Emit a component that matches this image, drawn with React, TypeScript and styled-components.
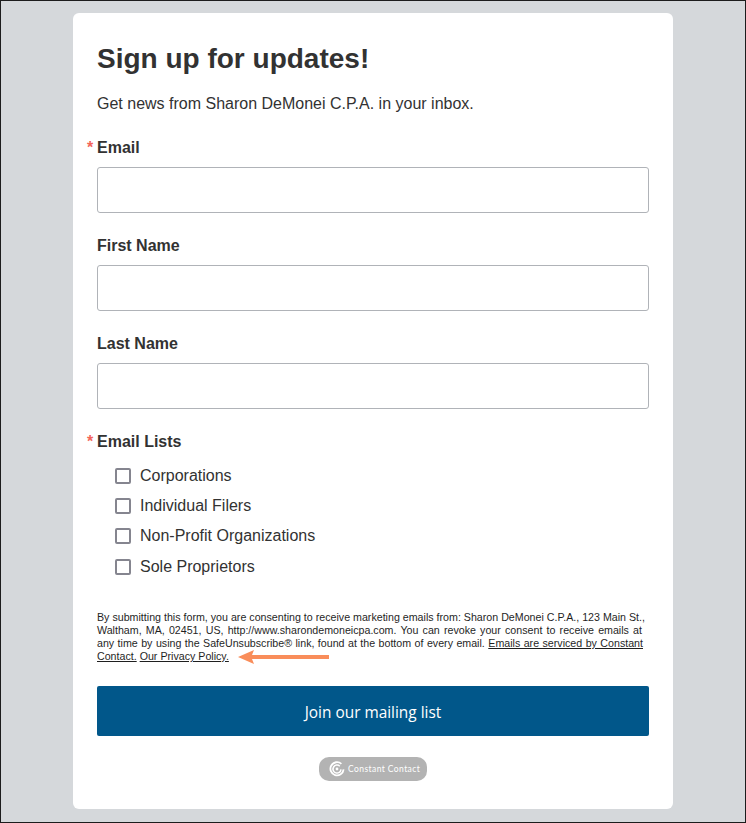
import styled, { createGlobalStyle } from 'styled-components';

const GlobalStyle = createGlobalStyle`
  * { box-sizing: border-box; }
  html, body { margin: 0; padding: 0; }
  body { font-family: "Liberation Sans", Arial, sans-serif; color: #323232; }
`;

const Page = styled.div`
  width: 746px;
  height: 823px;
  padding: 12px 72px 0;
  background-color: #d5d8db;
  border: 1px solid #1c1c1c;
  overflow: hidden;
`;
const Card = styled.form`
  width: 600px;
  height: 796px;
  padding: 30px 24px 0;
  background-color: #fff;
  border-radius: 6px;
`;
const Title = styled.h1`
  margin: 0;
  font-size: 28px;
  line-height: 32px;
  font-weight: 700;
`;
const Intro = styled.p`
  margin: 19px 0 0;
  font-size: 16px;
  line-height: 20px;
`;
const Field = styled.div`
  margin-top: 23px;
  &:first-of-type { margin-top: 24px; }
`;
const Label = styled.label<{ $required?: boolean }>`
  display: block;
  position: relative;
  font-size: 16px;
  line-height: 20px;
  font-weight: 700;
  &::before {
    content: ${(p) => (p.$required ? '"*"' : 'none')};
    position: absolute;
    left: -10px;
    top: 0;
    color: #f4655a;
    font-weight: 700;
    font-size: 16px;
  }
`;
const Input = styled.input`
  display: block;
  width: 552px;
  height: 46px;
  margin-top: 9px;
  background: #fff;
  border: 1px solid #b0b3b8;
  border-radius: 3px;
`;
const Lists = styled.div`
  margin-top: 23px;
`;
const Options = styled.div`
  display: flex;
  flex-direction: column;
  gap: 10.2px;
  margin: 14px 0 0 18px;
`;
const Option = styled.label`
  display: flex;
  align-items: center;
  gap: 9px;
  height: 20px;
  font-size: 16px;
`;
const Box = styled.input.attrs({ type: 'checkbox' })`
  appearance: none;
  width: 16px;
  height: 16px;
  margin: 0;
  background: #fff;
  border: 2px solid #85858f;
  border-radius: 2px;
`;
const Consent = styled.div`
  margin: 34px 0 0;
  font-size: 10.67px;
  line-height: 13.2px;
  color: #1f1f1f;
`;
const ConsentLine = styled.div<{ $width?: number }>`
  width: ${(p) => (p.$width ? `${p.$width}px` : 'auto')};
  white-space: ${(p) => (p.$width ? 'normal' : 'nowrap')};
  text-align-last: ${(p) => (p.$width ? 'justify' : 'left')};
`;
const ConsentEnd = styled.span`
  position: relative;
`;
const Link = styled.a`
  color: inherit;
  text-decoration: underline;
`;
const Arrow = styled.svg`
  position: absolute;
  left: 100%;
  top: -1px;
  margin-left: 9px;
`;
const Submit = styled.button`
  display: block;
  width: 552px;
  height: 50px;
  margin-top: 23px;
  padding: 2px 0 0;
  background-color: #01578a;
  border: 0;
  border-radius: 2px;
  color: #fff;
  font-family: "Open Sans", "Liberation Sans", sans-serif;
  font-size: 15.4px;
`;
const BadgeRow = styled.div`
  display: flex;
  justify-content: center;
  margin-top: 21px;
`;
const Badge = styled.div`
  display: flex;
  align-items: center;
  gap: 3px;
  width: 108px;
  height: 24px;
  padding-left: 10px;
  background-color: #b3b3b3;
  border-radius: 10px;
  color: #fff;
  font-family: Lato, sans-serif;
  font-size: 8.5px;
  letter-spacing: 0.42px;
  white-space: nowrap;
`;

const fields = ['First Name', 'Last Name'];
const lists = ['Corporations', 'Individual Filers', 'Non-Profit Organizations', 'Sole Proprietors'];

export default function App() {
  return (
    <Page>
      <GlobalStyle />
      <Card onSubmit={(e) => e.preventDefault()}>
        <Title>Sign up for updates!</Title>
        <Intro>Get news from Sharon DeMonei C.P.A. in your inbox.</Intro>
        <Field>
          <Label $required>Email</Label>
          <Input type="text" />
        </Field>
        {fields.map((f) => (
          <Field key={f}>
            <Label>{f}</Label>
            <Input type="text" />
          </Field>
        ))}
        <Lists>
          <Label $required>Email Lists</Label>
          <Options>
            {lists.map((l) => (
              <Option key={l}>
                <Box />
                {l}
              </Option>
            ))}
          </Options>
        </Lists>
        <Consent>
          <ConsentLine $width={548}>
            By submitting this form, you are consenting to receive marketing emails from: Sharon DeMonei C.P.A., 123 Main St.,
          </ConsentLine>
          <ConsentLine $width={545}>
            Waltham, MA, 02451, US, http://www.sharondemoneicpa.com. You can revoke your consent to receive emails at
          </ConsentLine>
          <ConsentLine $width={546}>
            any time by using the SafeUnsubscribe® link, found at the bottom of every email.{' '}
            <Link href="#">Emails are serviced by Constant</Link>
          </ConsentLine>
          <ConsentLine>
            <Link href="#">Contact.</Link>{' '}
            <ConsentEnd>
              <Link href="#">Our Privacy Policy.</Link>
              <Arrow width="91" height="16" viewBox="0 0 91 16">
                <path d="M0 8 L16 1 L14 6 H91 V10 H14 L16 15 Z" fill="#f98d5a" />
              </Arrow>
            </ConsentEnd>
          </ConsentLine>
        </Consent>
        <Submit type="submit">Join our mailing list</Submit>
        <BadgeRow>
          <Badge>
            <svg width="16" height="16" viewBox="0 0 16 16" fill="none" stroke="#fff">
              <path d="M12.4 2.8A6.6 6.6 0 1 0 14.6 8.4" strokeWidth="1.8" />
              <path d="M10.8 5.2A4 4 0 1 0 12 8.4" strokeWidth="1.5" />
              <circle cx="8" cy="8" r="1.4" fill="#fff" stroke="none" />
            </svg>
            Constant Contact
          </Badge>
        </BadgeRow>
      </Card>
    </Page>
  );
}
